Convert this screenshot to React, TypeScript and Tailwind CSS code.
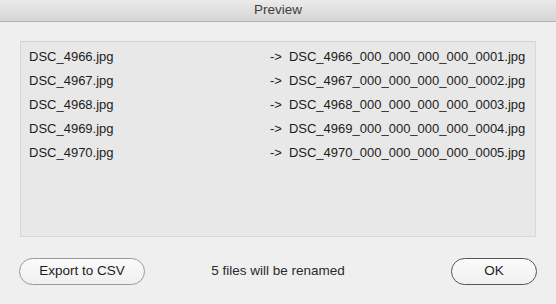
const files = [
  { from: "DSC_4966.jpg", to: "DSC_4966_000_000_000_000_0001.jpg" },
  { from: "DSC_4967.jpg", to: "DSC_4967_000_000_000_000_0002.jpg" },
  { from: "DSC_4968.jpg", to: "DSC_4968_000_000_000_000_0003.jpg" },
  { from: "DSC_4969.jpg", to: "DSC_4969_000_000_000_000_0004.jpg" },
  { from: "DSC_4970.jpg", to: "DSC_4970_000_000_000_000_0005.jpg" },
];

export default function App() {
  return (
    <div
      className="w-[556px] h-[304px] bg-[#efefef] text-[13px] text-[#1c1c1c] overflow-hidden"
      style={{ fontFamily: '"Liberation Sans", Arial, sans-serif' }}
    >
      <div className="h-[22px] flex items-center justify-center bg-gradient-to-b from-[#ebebeb] to-[#d5d5d5] border-b border-[#b4b4b4] text-[#404040] text-[13.5px]">
        Preview
      </div>

      <div className="mx-[20px] mt-[19px] h-[196px] bg-[#e8e8e8] border border-[#d8d8d8] border-t-[#d0d0d0] pt-[3px] pl-[8px]">
        {files.map((f) => (
          <div key={f.from} className="grid grid-cols-[241px_1fr] h-[24px] items-center">
            <span>{f.from}</span>
            <span className="flex">
              <span>-&gt;</span>
              <span className="ml-[7px]">{f.to}</span>
            </span>
          </div>
        ))}
      </div>

      <div className="mt-[21px] px-[19px] grid grid-cols-[1fr_auto_1fr] items-center">
        <div className="flex">
          <button className="w-[126px] h-[27px] rounded-full border border-[#999] bg-gradient-to-b from-[#fbfbfb] to-[#f0f0f0] text-[13.5px] text-[#1c1c1c]">
            Export to CSV
          </button>
        </div>
        <span className="text-[#2a2a2a] text-[13.5px]">5 files will be renamed</span>
        <div className="flex justify-end">
          <button className="w-[86px] h-[27px] rounded-full border border-[#555] bg-gradient-to-b from-[#fbfbfb] to-[#f0f0f0] text-[13.5px] text-[#1c1c1c]">
            OK
          </button>
        </div>
      </div>
    </div>
  );
}
